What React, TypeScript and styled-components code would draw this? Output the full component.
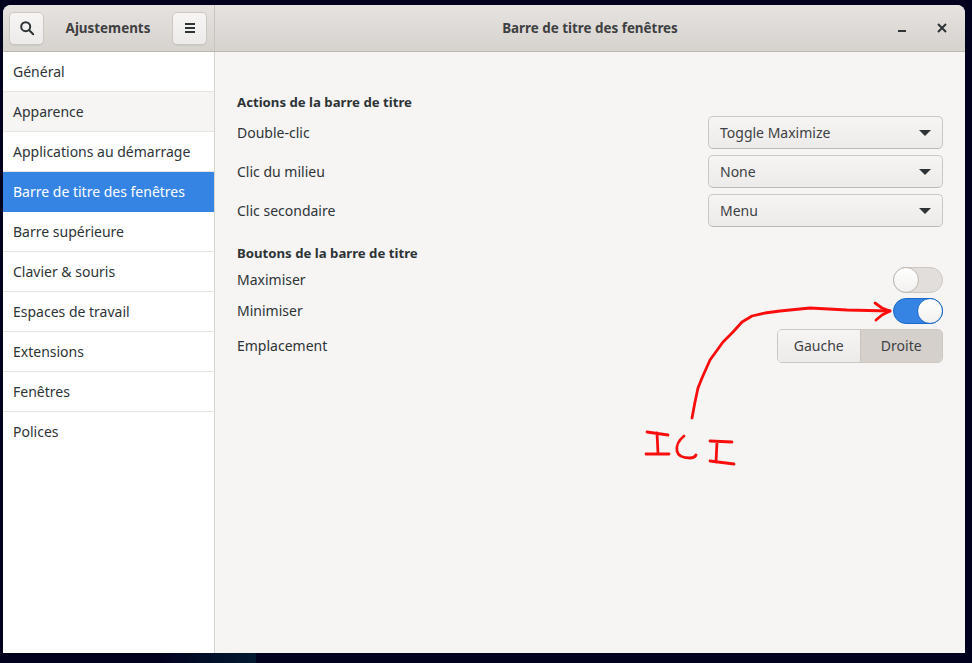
import React from 'react';
import styled, { createGlobalStyle } from 'styled-components';

const Global = createGlobalStyle`
  html, body { margin: 0; padding: 0; height: 100%; background: #02021f; overflow: hidden; }
  * { box-sizing: border-box; }
  #root { height: 100%; }
`;

const Desktop = styled.div`
  position: relative;
  width: 972px;
  height: 663px;
  padding: 5px 7px 10px 3px;
  background: #02021f;
  font-family: "Noto Sans", "Open Sans", sans-serif;
  font-size: 14px;
  color: #2e3436;
`;

const Glow = styled.div`
  position: absolute;
  left: 158px;
  bottom: 0;
  width: 98px;
  height: 10px;
  background: linear-gradient(90deg, #02021f, #021a30);
  clip-path: polygon(0 0, 100% 0, 100% 100%, 12% 100%);
`;

const Window = styled.div`
  display: flex;
  flex-direction: column;
  height: 648px;
  border-radius: 8px 8px 0 0;
  overflow: hidden;
  background: #f6f5f4;
`;

const TitleBar = styled.header`
  display: flex;
  height: 47px;
  flex: none;
  background: linear-gradient(#e6e3e0, #d6d2ce);
  border-bottom: 1px solid #bfb8b1;
`;

const SideHeader = styled.div`
  display: flex;
  align-items: center;
  justify-content: space-between;
  width: 212px;
  padding: 0 7px 0 6px;
  border-right: 1px solid #c9c3bd;
`;

const MainHeader = styled.div`
  position: relative;
  flex: 1;
  display: flex;
  align-items: center;
  justify-content: center;
`;

const HeaderTitle = styled.span`
  font-weight: 700;
  font-size: 13.4px;
  color: #3d3f41;
`;

const IconButton = styled.button`
  width: 35px;
  height: 33px;
  padding: 0;
  display: flex;
  align-items: center;
  justify-content: center;
  border: 1px solid #cdc7c2;
  border-radius: 5px;
  background: linear-gradient(#f6f5f4, #edebe9);
  box-shadow: 0 1px 0 rgba(0, 0, 0, 0.06);
  color: #2e3436;
`;

const WindowControls = styled.div`
  position: absolute;
  right: 0;
  top: 0;
  height: 46px;
  display: flex;
  align-items: center;
  gap: 23px;
  padding-right: 15px;
`;

const Content = styled.div`
  display: flex;
  flex: 1;
  min-height: 0;
`;

const Sidebar = styled.nav`
  width: 212px;
  flex: none;
  background: #ffffff;
  border-right: 1px solid #d8d4d0;
`;

const SideRow = styled.div<{ $state?: 'selected' | 'hover' }>`
  height: 40px;
  padding: 0 0 1px 10px;
  display: flex;
  align-items: center;
  border-bottom: 1px solid ${p => (p.$state === 'selected' ? '#3584e4' : '#e8e6e3')};
  background: ${p => (p.$state === 'selected' ? '#3584e4' : p.$state === 'hover' ? '#f6f5f4' : '#ffffff')};
  color: ${p => (p.$state === 'selected' ? '#ffffff' : '#2e3436')};
  &:last-child { border-bottom: none; }
`;

const Panel = styled.main`
  flex: 1;
  padding: 40px 22px 0 22px;
`;

const SectionTitle = styled.h2<{ $gap?: number }>`
  margin: ${p => p.$gap ?? 0}px 0 1px;
  font-size: 13.2px;
  font-weight: 700;
  line-height: 20px;
  color: #2e3436;
`;

const Row = styled.div<{ $h: number }>`
  display: flex;
  align-items: center;
  justify-content: space-between;
  height: ${p => p.$h}px;
`;

const Select = styled.div`
  width: 235px;
  height: 33px;
  display: flex;
  align-items: center;
  justify-content: space-between;
  padding: 0 11px 0 11px;
  border: 1px solid #cdc7c2;
  border-bottom-color: #bfb8b1;
  border-radius: 5px;
  background: linear-gradient(#f6f5f4, #edebe9);
  color: #3d4143;
`;

const Caret = styled.span`
  width: 0;
  height: 0;
  border-left: 6.5px solid transparent;
  border-right: 6.5px solid transparent;
  border-top: 6.5px solid #2e3436;
`;

const Switch = styled.div<{ $on?: boolean }>`
  position: relative;
  width: 50px;
  height: 26px;
  border-radius: 13px;
  border: 1px solid ${p => (p.$on ? '#1b6acb' : '#cdc7c2')};
  background: ${p => (p.$on ? '#3584e4' : '#e1dedb')};
`;

const Knob = styled.span<{ $on?: boolean }>`
  position: absolute;
  top: -1px;
  ${p => (p.$on ? 'right: -1px;' : 'left: -1px;')}
  width: 26px;
  height: 26px;
  border-radius: 50%;
  border: 1px solid ${p => (p.$on ? '#1b6acb' : '#bfb8b1')};
  background: linear-gradient(#ffffff, #f2f1ef);
`;

const Segmented = styled.div`
  display: flex;
  width: 166px;
  height: 34px;
  border: 1px solid #cdc7c2;
  border-radius: 5px;
  overflow: hidden;
`;

const Segment = styled.div<{ $active?: boolean }>`
  flex: 1;
  display: flex;
  align-items: center;
  justify-content: center;
  color: #3d4143;
  background: ${p => (p.$active ? '#d5d0cc' : 'linear-gradient(#f6f5f4, #edebe9)')};
  border-left: ${p => (p.$active ? '1px solid #c9c3bd' : 'none')};
`;

const Sketch = styled.svg`
  position: absolute;
  left: 0;
  top: 0;
  pointer-events: none;
`;

const items = ['Général', 'Apparence', 'Applications au démarrage', 'Barre de titre des fenêtres', 'Barre supérieure', 'Clavier & souris', 'Espaces de travail', 'Extensions', 'Fenêtres', 'Polices'];

export default function App() {
  return (
    <Desktop>
      <Global />
      <Glow />
      <Window>
        <TitleBar>
          <SideHeader>
            <IconButton aria-label="Rechercher">
              <svg width="16" height="16" viewBox="0 0 16 16" fill="none" stroke="#2e3436" strokeWidth="2">
                <circle cx="6.7" cy="6.7" r="4.5" />
                <path d="M10 10l4.2 4.2" strokeLinecap="round" />
              </svg>
            </IconButton>
            <HeaderTitle>Ajustements</HeaderTitle>
            <IconButton aria-label="Menu">
              <svg width="16" height="16" viewBox="0 0 16 16" fill="#2e3436">
                <rect x="3" y="3" width="10" height="2" />
                <rect x="3" y="7" width="10" height="2" />
                <rect x="3" y="11" width="10" height="2" />
              </svg>
            </IconButton>
          </SideHeader>
          <MainHeader>
            <HeaderTitle>Barre de titre des fenêtres</HeaderTitle>
            <WindowControls>
              <svg width="16" height="16" viewBox="0 0 16 16" fill="#2e3436">
                <rect x="3" y="10" width="8" height="2" />
              </svg>
              <svg width="16" height="16" viewBox="0 0 16 16" fill="none" stroke="#2e3436" strokeWidth="2">
                <path d="M4 4l8 8M12 4l-8 8" />
              </svg>
            </WindowControls>
          </MainHeader>
        </TitleBar>
        <Content>
          <Sidebar>
            {items.map((t, i) => (
              <SideRow key={t} $state={i === 3 ? 'selected' : i === 1 ? 'hover' : undefined}>{t}</SideRow>
            ))}
          </Sidebar>
          <Panel>
            <SectionTitle>Actions de la barre de titre</SectionTitle>
            <Row $h={39}>Double-clic<Select>Toggle Maximize<Caret /></Select></Row>
            <Row $h={39}>Clic du milieu<Select>None<Caret /></Select></Row>
            <Row $h={39}>Clic secondaire<Select>Menu<Caret /></Select></Row>
            <SectionTitle $gap={13}>Boutons de la barre de titre</SectionTitle>
            <Row $h={31}>Maximiser<Switch><Knob /></Switch></Row>
            <Row $h={31}>Minimiser<Switch $on><Knob $on /></Switch></Row>
            <Row $h={39}>Emplacement<Segmented><Segment>Gauche</Segment><Segment $active>Droite</Segment></Segmented></Row>
          </Panel>
        </Content>
      </Window>
      <Sketch width="972" height="663" viewBox="0 0 972 663" fill="none" stroke="#fb0d0d" strokeWidth="2.8" strokeLinecap="round" strokeLinejoin="round">
        <path d="M692 418L695 402L698 388L702 378L710 360L723 342L733 332L742 322L752 316L765 313L780 311L810 308L847 310L890 311" />
        <path d="M875 303L882 308L890 311L882 315L876 320" />
        <path d="M647 432L668 435M657 433L658 453M646 454L669 454" />
        <path d="M684 436C679 440 676 446 677 451C678 456 684 458 690 458C693 458 695 457 696 455" />
        <path d="M710 441L732 442M717 442L716 462M710 461L734 464" />
      </Sketch>
    </Desktop>
  );
}
